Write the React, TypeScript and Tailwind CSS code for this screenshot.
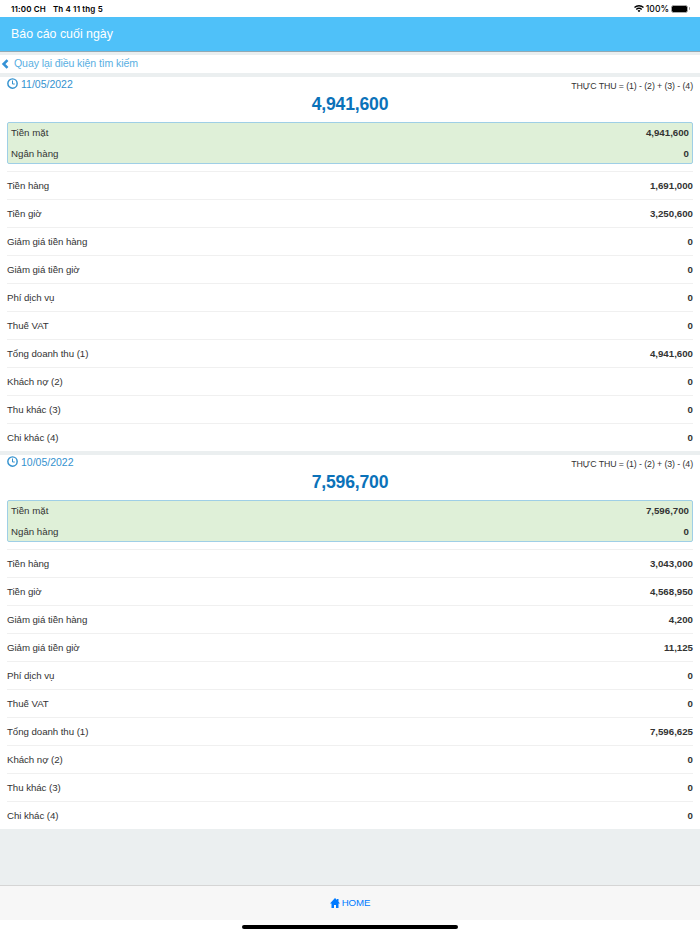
const labels = [
  'Tiền hàng',
  'Tiền giờ',
  'Giảm giá tiền hàng',
  'Giảm giá tiền giờ',
  'Phí dịch vụ',
  'Thuế VAT',
  'Tổng doanh thu (1)',
  'Khách nợ (2)',
  'Thu khác (3)',
  'Chi khác (4)',
];

type Report = {
  date: string;
  total: string;
  cash: string;
  bank: string;
  values: string[];
};

const reports: Report[] = [
  {
    date: '11/05/2022',
    total: '4,941,600',
    cash: '4,941,600',
    bank: '0',
    values: ['1,691,000', '3,250,600', '0', '0', '0', '0', '4,941,600', '0', '0', '0'],
  },
  {
    date: '10/05/2022',
    total: '7,596,700',
    cash: '7,596,700',
    bank: '0',
    values: ['3,043,000', '4,568,950', '4,200', '11,125', '0', '0', '7,596,625', '0', '0', '0'],
  },
];

function ClockIcon() {
  return (
    <svg viewBox="0 0 22 22" className="-mt-[2px] h-[11px] w-[11px] shrink-0" fill="none" stroke="currentColor">
      <circle cx="11" cy="11" r="9.3" strokeWidth="2.9" />
      <path d="M11 5v7H15.500" strokeWidth="2" />
    </svg>
  );
}

function WifiIcon() {
  return (
    <svg viewBox="0 0 20 15" className="h-[7.5px] w-[10px]" fill="none" stroke="black" strokeWidth="2.8">
      <path d="M1 5.2a12.7 12.7 0 0 1 18 0" />
      <path d="M4.6 8.8a7.6 7.6 0 0 1 10.8 0" />
      <path d="M10 14.5l-2.9-3a4.1 4.1 0 0 1 5.8 0z" fill="black" stroke="none" />
    </svg>
  );
}

function StatusBar() {
  return (
    <div className="flex h-[17px] items-center justify-between pr-[10px] pl-[11px] font-[Inter,sans-serif] text-[8px] font-semibold text-black">
      <div className="flex gap-[7px] tracking-[0.14px]">
        <span>11:00 CH</span>
        <span>Th 4 11 thg 5</span>
      </div>
      <div className="flex items-center gap-[2px]">
        <WifiIcon />
        <span className="pt-px text-[8.6px] font-medium">100%</span>
        <div className="flex items-center gap-px">
          <div className="h-[8px] w-[17px] rounded-[2.5px] border border-[#aaa] bg-black" />
          <div className="h-[3px] w-px rounded-r bg-[#999]" />
        </div>
      </div>
    </div>
  );
}

function ReportCard({ report }: { report: Report }) {
  return (
    <section className="h-[374px] bg-white px-[7px]">
      <div className="flex h-[15px] items-center justify-between">
        <div className="flex items-center gap-[3px] text-[#3492cf]">
          <ClockIcon />
          <span className="text-[10.5px]">{report.date}</span>
        </div>
        <span className="pt-[3px] text-[8.8px] tracking-[-0.09px]">THỰC THU = (1) - (2) + (3) - (4)</span>
      </div>
      <div className="flex h-[30px] items-center justify-center pb-[5px] text-[17.6px] font-bold tracking-[-0.2px] text-[#0b72b9]">
        {report.total}
      </div>
      <div className="h-[42px] rounded-[2px] border border-[#9fcfe6] bg-[#dff0d8] px-[3px]">
        <div className="flex h-5 items-center justify-between">
          <span>Tiền mặt</span>
          <b>{report.cash}</b>
        </div>
        <div className="flex h-[21px] items-center justify-between">
          <span>Ngân hàng</span>
          <b>{report.bank}</b>
        </div>
      </div>
      <div className="pt-[7px]">
        {labels.map((label, i) => (
          <div key={label} className="flex h-7 items-center justify-between border-t border-[#f0f0f0]">
            <span className="tracking-[-0.06px]">{label}</span>
            <b>{report.values[i]}</b>
          </div>
        ))}
      </div>
    </section>
  );
}

export default function App() {
  return (
    <div className="flex h-[934px] w-[700px] flex-col overflow-hidden bg-white font-['Liberation_Sans',Arial,sans-serif] text-[9.7px] leading-none text-[#333]">
      <StatusBar />
      <header className="flex h-[35px] items-center border-b border-[#92a9b4] bg-[#4fc1f9] pl-[11px] text-[12.4px] text-white">
        Báo cáo cuối ngày
      </header>
      <main className="flex grow flex-col gap-1 bg-[#ebeff0] pt-[3px]">
        <div className="flex h-[18px] items-center gap-[5px] bg-white pb-[2px] pl-[1px] text-[10.6px] tracking-[-0.12px] text-[#5aafe2]">
          <svg viewBox="0 0 14 18" className="mt-px h-[10px] w-[8px]" fill="none" stroke="#3492d6" strokeWidth="4.6">
            <path d="M11.500 2L4.500 9l7 7" />
          </svg>
          <span>Quay lại điều kiện tìm kiếm</span>
        </div>
        {reports.map((report) => (
          <ReportCard key={report.date} report={report} />
        ))}
      </main>
      <footer className="flex h-[35px] items-center justify-center gap-[2px] border-t border-[#d5d5d5] bg-[#f7f7f7] text-[#007aff]">
        <svg viewBox="0 0 20 20" className="-mt-px h-[10px] w-[10px]" fill="currentColor">
          <path d="M10 0L0 11h3V20h5v-6h4v6h5v-9h3L17 7.300V2h-3v2.200z" />
        </svg>
        <span className="tracking-[-0.1px]">HOME</span>
      </footer>
      <div className="flex h-[14px] justify-center pt-[5px]">
        <div className="h-1 w-[216px] rounded-full bg-black" />
      </div>
    </div>
  );
}
